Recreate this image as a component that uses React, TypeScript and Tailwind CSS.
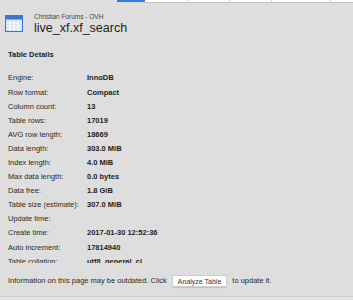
const rows: [string, string][] = [
  ['Engine:', 'InnoDB'],
  ['Row format:', 'Compact'],
  ['Column count:', '13'],
  ['Table rows:', '17019'],
  ['AVG row length:', '18669'],
  ['Data length:', '303.0 MiB'],
  ['Index length:', '4.0 MiB'],
  ['Max data length:', '0.0 bytes'],
  ['Data free:', '1.8 GiB'],
  ['Table size (estimate):', '307.0 MiB'],
  ['Update time:', ''],
  ['Create time:', '2017-01-30 12:52:36'],
  ['Auto increment:', '17814940'],
  ['Table collation:', 'utf8_general_ci'],
];

function TableIcon() {
  return (
    <svg width="18" height="17" viewBox="0 0 18 17">
      <rect x="0.5" y="0.5" width="17" height="16" fill="#cfe0f7" stroke="#3a78d4" />
      <rect x="0.5" y="0.5" width="17" height="4" fill="#3a78d4" />
      {[5, 9, 13].map((x) => (
        <line key={x} x1={x} y1="5" x2={x} y2="16" stroke="#ffffff" strokeWidth="1.2" />
      ))}
      {[8, 11, 14].map((y) => (
        <line key={y} x1="1" y1={y} x2="17" y2={y} stroke="#ffffff" strokeWidth="0.8" />
      ))}
    </svg>
  );
}

export default function App() {
  return (
    <div className="w-[353px] h-[300px] bg-[#dedede] overflow-hidden flex flex-col font-['Liberation_Sans',Arial,sans-serif] text-[#1d1d1d]">
      <div className="h-[3px] flex shrink-0">
        <div className="w-[117px]" />
        <div className="w-[28px] h-[2px] bg-[#2f7de1]" />
        <div className="flex-1 h-[3px] bg-white border-b border-[#c4c4c4] flex">
          <div className="w-[44px] border-r border-[#d0d0d0]" />
          <div className="w-[41px] border-r border-[#d0d0d0]" />
          <div className="w-[42px] border-r border-[#d0d0d0]" />
          <div className="w-[59px] border-r border-[#d0d0d0]" />
        </div>
      </div>
      <div className="flex items-center gap-[11px] pl-[5px] pt-[9px] shrink-0">
        <TableIcon />
        <div className="flex flex-col">
          <span className="text-[6.5px] leading-[9px] text-[#444]">Christian Forums - OVH</span>
          <span className="text-[12.5px] leading-[14px] text-[#222]">live_xf.xf_search</span>
        </div>
      </div>
      <div className="pl-[8px] pt-[15px] text-[7.5px] font-bold leading-[10px] shrink-0">Table Details</div>
      <div className="h-[203px] shrink-0 overflow-hidden pt-[11px] pl-[8px]">
        {rows.map(([label, value]) => (
          <div key={label} className="flex h-[14.1px] items-center text-[7.5px]">
            <span className="w-[79px] text-[#2a2a2a]">{label}</span>
            <span className="font-bold">{value}</span>
          </div>
        ))}
      </div>
      <div className="flex items-center h-[12px] mt-[12px] pl-[8px] text-[7.5px] text-[#2a2a2a] shrink-0">
        <span>Information on this page may be outdated. Click</span>
        <button className="ml-[5px] h-[12px] px-[5px] bg-white rounded-[2px] border border-[#cfcfcf] shadow-[0_0.5px_1px_rgba(0,0,0,0.15)] text-[7px] leading-none text-[#333]">
          Analyze Table
        </button>
        <span className="ml-[5px]">to update it.</span>
      </div>
      <div className="flex-1" />
      <div className="h-[4px] border-t border-[#cdcdcd] bg-[#e3e3e3] shrink-0" />
    </div>
  );
}
